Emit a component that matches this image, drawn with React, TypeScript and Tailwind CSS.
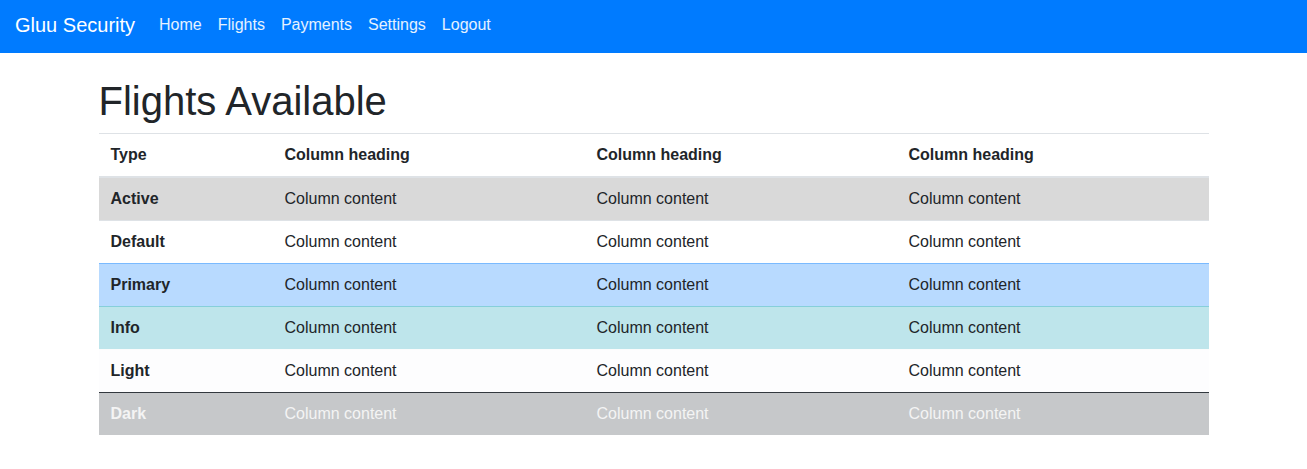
const NAV_LINKS = ["Home", "Flights", "Payments", "Settings", "Logout"];

type RowKind = "active" | "default" | "primary" | "info" | "light" | "dark";

const ROWS: { label: string; kind: RowKind }[] = [
  { label: "Active", kind: "active" },
  { label: "Default", kind: "default" },
  { label: "Primary", kind: "primary" },
  { label: "Info", kind: "info" },
  { label: "Light", kind: "light" },
  { label: "Dark", kind: "dark" },
];

const rowStyles: Record<RowKind, string> = {
  active: "bg-[#d9d9d9] text-[#212529] border-[#dee2e6]",
  default: "bg-white text-[#212529] border-[#dee2e6]",
  primary: "bg-[#b8daff] text-[#212529] border-[#7abaff]",
  info: "bg-[#bee5eb] text-[#212529] border-[#86cfda]",
  light: "bg-[#fdfdfe] text-[#212529] border-[#fbfcfc]",
  dark: "bg-[#c6c8ca] text-[#f4f4f4] border-[#32383e]",
};

function Navbar() {
  return (
    <nav className="flex h-[53px] items-center bg-[#007bff] px-[15px] pb-1">
      <a href="#" className="mr-4 text-[20px] leading-[30px] text-white">
        Gluu Security
      </a>
      <ul className="flex items-center">
        {NAV_LINKS.map((link) => (
          <li key={link}>
            <a href="#" className="block px-2 text-base leading-6 text-white/90">
              {link}
            </a>
          </li>
        ))}
      </ul>
    </nav>
  );
}

export default function App() {
  return (
    <div className="min-h-screen bg-white font-['Liberation_Sans',Arial,sans-serif] text-[#212529]">
      <Navbar />
      <main className="mx-auto w-[1110px] pt-6">
        <h1 className="mb-2 text-[40px] leading-[48px] font-normal">Flights Available</h1>
        <table className="w-full border-collapse text-base">
          <colgroup>
            <col className="w-[174px]" />
            <col className="w-[312px]" />
            <col className="w-[312px]" />
            <col className="w-[312px]" />
          </colgroup>
          <thead>
            <tr className="border-t border-b-2 border-[#dee2e6]">
              <th className="px-3 py-3 text-left leading-[18px] font-bold">Type</th>
              <th className="px-3 py-3 text-left leading-[18px] font-bold">Column heading</th>
              <th className="px-3 py-3 text-left leading-[18px] font-bold">Column heading</th>
              <th className="px-3 py-3 text-left leading-[18px] font-bold">Column heading</th>
            </tr>
          </thead>
          <tbody>
            {ROWS.map((row, i) => (
              <tr
                key={row.label}
                className={`${i === 0 ? "" : "border-t"} ${rowStyles[row.kind]}`}
              >
                <th className="px-3 py-3 text-left leading-[18px] font-bold">{row.label}</th>
                <td className="px-3 py-3 leading-[18px]">Column content</td>
                <td className="px-3 py-3 leading-[18px]">Column content</td>
                <td className="px-3 py-3 leading-[18px]">Column content</td>
              </tr>
            ))}
          </tbody>
        </table>
      </main>
    </div>
  );
}
